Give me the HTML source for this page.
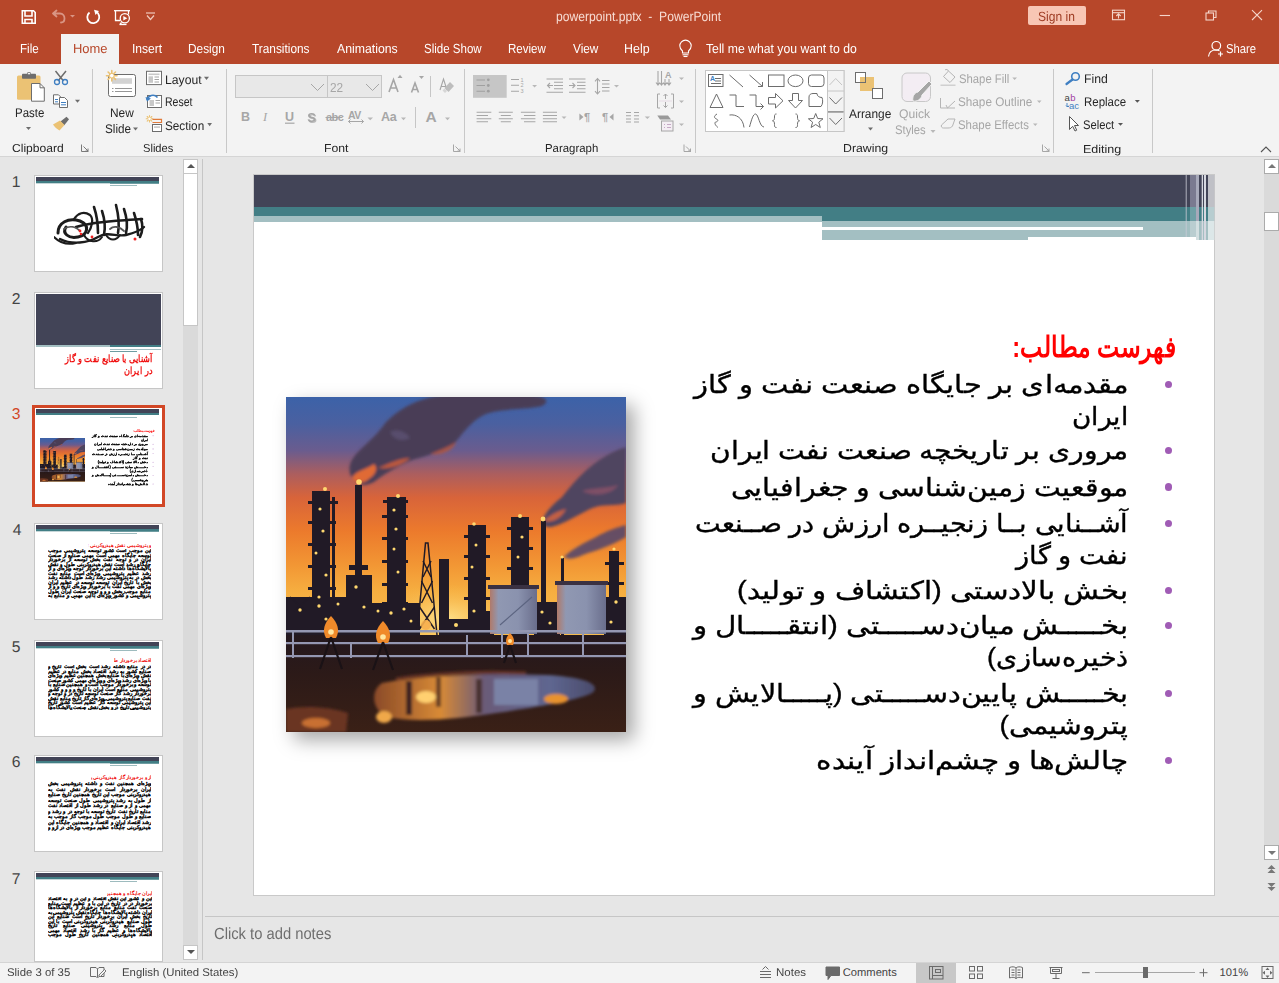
<!DOCTYPE html>
<html><head><meta charset="utf-8">
<style>
*{margin:0;padding:0;box-sizing:border-box}
html,body{width:1279px;height:983px;overflow:hidden;background:#E6E6E6;font-family:"Liberation Sans",sans-serif;color:#262626}
.a{position:absolute}
.t{position:absolute;white-space:nowrap;line-height:1}
#title{left:0;top:0;width:1279px;height:64px;background:#B7472A}
.tab{position:absolute;top:42px;font-size:13px;color:#fff;white-space:nowrap;line-height:1}
#ribbon{left:0;top:64px;width:1279px;height:93px;background:#F3F3F3;border-bottom:1px solid #D5D5D5}
.sep{position:absolute;width:1px;background:#C8C8C8}
.gl{position:absolute;top:142px;font-size:12px;color:#262626;white-space:nowrap;line-height:1}
.rb{position:absolute;font-size:12.5px;color:#262626;white-space:nowrap;line-height:1}
.dis{color:#A6A6A6}
#status{left:0;top:962px;width:1279px;height:21px;background:#F3F3F3}
.st{position:absolute;top:966px;font-size:12px;color:#444;white-space:nowrap;line-height:1}
.thumb{position:absolute;left:34px;width:128px;height:97px;background:#fff;border:1px solid #C6C6C6;overflow:hidden}
.tn{position:absolute;left:11px;font-size:14px;color:#444;line-height:1}
.fa{position:absolute;font-size:25px;line-height:25px;direction:rtl;white-space:nowrap;color:#000;text-align:right;transform-origin:100% 50%;-webkit-text-stroke:0.35px #000}
.j{text-align:justify;text-align-last:justify}
.tx{position:absolute;white-space:nowrap;line-height:1;transform-origin:0 0;text-rendering:geometricPrecision}
.mt{direction:rtl;white-space:normal;color:#111;font-family:"Liberation Sans",sans-serif}
.jt{text-align:justify;text-align-last:right}
.mini .fa{-webkit-text-stroke:3px #000}
</style></head><body>
<!-- title bar -->
<div id="title" class="a"></div>
<div class="a" style="left:1028px;top:6px;width:58px;height:19px;background:#F8C6B4;border-radius:2px"></div>

<div class="a" style="left:61px;top:34px;width:58px;height:30px;background:#F3F3F3"></div>

<!-- ribbon -->
<div id="ribbon" class="a"></div>
<div class="sep" style="left:92px;top:69px;height:84px"></div>
<div class="sep" style="left:226px;top:69px;height:84px"></div>
<div class="sep" style="left:464px;top:69px;height:84px"></div>
<div class="sep" style="left:695px;top:69px;height:84px"></div>
<div class="sep" style="left:1053px;top:69px;height:84px"></div>
<div class="sep" style="left:1152px;top:69px;height:84px"></div>

<!-- thumbnails -->
<div class="a" style="left:34px;top:175px;width:129px;height:97px;border:1px solid #C6C6C6;background:#fff"></div>
<div class="a" style="left:36px;top:177px;width:123px;height:4px;background:#424457"></div><div class="a" style="left:36px;top:181px;width:123px;height:2px;background:#427E85"></div><div class="a" style="left:36px;top:183px;width:74px;height:1px;background:#C5D6D8"></div><div class="a" style="left:110px;top:183px;width:49px;height:1px;background:#6E9CA1"></div><div class="a" style="left:110px;top:185px;width:27px;height:1px;background:#9DBBBE"></div>
<svg class="a" style="left:54px;top:203px" width="92" height="44" viewBox="0 0 92 44">
<g fill="none" stroke="#1C1C1C" stroke-linecap="round">
<path stroke-width="3" d="M4 30 C4 20 14 14 26 18 C36 22 34 32 24 34 C14 36 8 30 12 24"/>
<path stroke-width="2.4" d="M6 36 C18 42 34 40 44 34 C54 28 62 34 72 32 C80 30 86 28 90 24"/>
<path stroke-width="2.6" d="M22 24 C40 18 64 18 88 16"/>
<path stroke-width="2.2" d="M20 16 C24 10 30 8 36 12 C40 16 38 24 34 30"/>
<path stroke-width="2.6" d="M40 4 C42 10 44 20 44 30 M48 8 C50 14 52 22 50 32 M62 2 C64 10 66 20 64 30 M70 6 C72 12 74 22 72 30 M80 10 C82 16 84 22 84 32 M87 16 C89 22 89 28 86 34"/>
<path stroke-width="2" d="M52 32 C56 38 62 38 66 32 M30 32 C34 40 44 40 48 34"/>
<path stroke-width="1.8" stroke="#555" d="M10 26 C16 22 22 24 26 28 M56 26 C60 22 66 24 70 28"/>
<path stroke-width="2" d="M0 34 C6 40 14 42 22 40"/>
</g>
<circle cx="26" cy="28" r="1.4" fill="#E22"/><circle cx="27" cy="31" r="1.3" fill="#E22"/><circle cx="38" cy="34" r="1.4" fill="#E22"/><circle cx="81" cy="36" r="1.5" fill="#E22"/>
</svg>
<div class="a" style="left:34px;top:292px;width:129px;height:97px;border:1px solid #C6C6C6;background:#fff"></div>
<div class="a" style="left:36px;top:294px;width:125px;height:51px;background:#424457"></div><div class="a" style="left:36px;top:345px;width:74px;height:2px;background:#A3BFC2"></div><div class="a" style="left:110px;top:345px;width:51px;height:2px;background:#427E85"></div><div class="a" style="left:110px;top:349px;width:51px;height:1px;background:#A3BFC2"></div><div class="a" style="left:110px;top:351px;width:27px;height:1px;background:#6E9CA1"></div>
<div class="a" style="left:32px;top:405px;width:133px;height:102px;border:3px solid #D24726;background:#fff"></div>
<div class="a" style="left:36px;top:409px;width:123px;height:4px;background:#424457"></div><div class="a" style="left:36px;top:413px;width:123px;height:2px;background:#427E85"></div><div class="a" style="left:110px;top:417px;width:27px;height:1px;background:#9DBBBE"></div>
<svg class="a" style="left:40px;top:438px" width="45" height="43.5" viewBox="0 0 340 335" preserveAspectRatio="none"><g>
<rect width="340" height="335" fill="url(#sky)"/>
<ellipse cx="160" cy="222" rx="70" ry="35" fill="url(#glow)"/>
<ellipse cx="55" cy="215" rx="45" ry="22" fill="url(#glow)" opacity="0.6"/>
<!-- smoke 1 -->
<g filter="url(#b1)" transform="translate(0,-5)">
<path d="M70 90 C60 82 62 70 72 60 C82 50 92 42 100 30 C112 18 126 10 142 6 C162 0 200 -2 240 2 C258 4 266 8 256 14 C240 18 218 16 200 22 C186 28 178 40 168 52 C156 60 140 64 126 68 C112 74 98 82 88 90 C80 94 74 94 70 90 Z" fill="#4A3E56"/>
<path d="M66 86 C70 78 80 78 88 72 C92 76 90 82 84 86 C78 92 70 92 66 86 Z" fill="#E06A36"/>
<path d="M92 76 C102 72 114 66 124 66 C118 72 104 78 92 76 Z" fill="#C85C3A" opacity="0.9"/>
<path d="M144 62 C154 58 164 54 170 50 C168 58 156 64 144 62 Z" fill="#B5553A" opacity="0.8"/>
<path d="M104 40 C112 36 120 40 124 46 C116 50 108 48 104 40 Z" fill="#5E5478" opacity="0.7"/>
</g>
<!-- smoke 2 & 3 -->
<g filter="url(#b1)">
<path d="M256 126 C258 116 266 108 276 100 C284 90 292 80 304 70 C314 62 326 54 340 50 L340 106 C328 110 316 106 304 112 C292 118 282 124 272 128 C264 131 258 131 256 126 Z" fill="#4F4460"/>
<path d="M258 124 C264 118 272 114 280 112 C276 120 268 126 258 124 Z" fill="#D06440" opacity="0.9"/>
<path d="M296 94 C308 90 320 92 332 88 C326 98 308 100 296 94 Z" fill="#A0566A" opacity="0.6"/>
<path d="M278 160 C286 152 298 146 310 140 C320 134 332 130 340 128 L340 140 C330 146 316 152 302 156 C292 160 284 164 278 160 Z" fill="#56486A" opacity="0.9"/>
</g>
<!-- silhouettes -->
<g fill="#211A26">
<rect x="26" y="94" width="18" height="146"/><rect x="46" y="100" width="3" height="140"/>
<rect x="22" y="104" width="30" height="3"/><rect x="22" y="124" width="28" height="3"/><rect x="22" y="146" width="28" height="3"/><rect x="22" y="168" width="28" height="3"/><rect x="22" y="190" width="28" height="3"/>
<rect x="69" y="88" width="7" height="150"/>
<rect x="63" y="168" width="19" height="5"/><rect x="60" y="178" width="26" height="62"/>
<rect x="101" y="100" width="19" height="140"/><rect x="97" y="103" width="25" height="3"/><rect x="96" y="118" width="26" height="3"/><rect x="96" y="140" width="26" height="3"/><rect x="96" y="163" width="26" height="3"/><rect x="96" y="186" width="26" height="3"/><rect x="96" y="205" width="26" height="3"/>
<rect x="153" y="162" width="10" height="78"/>
<rect x="182" y="128" width="18" height="112"/><rect x="178" y="138" width="26" height="3"/><rect x="178" y="158" width="26" height="3"/><rect x="178" y="180" width="26" height="3"/><rect x="178" y="200" width="26" height="3"/>
<rect x="225" y="120" width="18" height="120"/><rect x="221" y="130" width="26" height="3"/><rect x="221" y="150" width="26" height="3"/><rect x="221" y="170" width="26" height="3"/>
<rect x="255" y="124" width="5" height="116"/>
<rect x="275" y="161" width="3" height="79"/>
<rect x="323" y="154" width="10" height="86"/><rect x="319" y="165" width="19" height="3"/><rect x="319" y="185" width="19" height="3"/>
<rect x="0" y="200" width="62" height="40"/>
<rect x="86" y="206" width="48" height="34"/>
<rect x="162" y="222" width="22" height="18"/>
<rect x="200" y="214" width="8" height="26"/>
<rect x="248" y="205" width="26" height="35"/>
<rect x="318" y="200" width="22" height="40"/>
</g>
<g fill="none" stroke="#211A26" stroke-width="1.5">
<path d="M131 238 L139.5 146 H142 L151 238"/>
<path d="M133.5 210 L148.5 232 M148.5 210 L133.5 232 M135.5 184 L146.5 206 M146.5 184 L135.5 206 M137 164 L145 180 M145 164 L137 180"/>
<path d="M4 200 L20 214 M24 200 L8 214"/>
</g>
<!-- tanks -->
<rect x="204" y="191" width="47" height="46" fill="url(#tank)"/>
<path d="M214 228 L246 200" stroke="#5C6480" stroke-width="1.2"/>
<rect x="202" y="188" width="51" height="4" fill="#3A3142"/>
<rect x="271" y="187" width="49" height="50" fill="url(#tank)"/>
<rect x="269" y="184" width="53" height="4" fill="#3A3142"/>
<!-- lights -->
<g fill="#FFD870">
<circle cx="39" cy="92" r="2"/><circle cx="34" cy="112" r="1.6"/><circle cx="37" cy="134" r="1.6"/><circle cx="30" cy="156" r="1.5"/><circle cx="40" cy="178" r="1.6"/><circle cx="33" cy="200" r="1.6"/>
<circle cx="73" cy="85" r="2.8"/><circle cx="112" cy="99" r="2"/><circle cx="108" cy="113" r="1.6"/><circle cx="110" cy="132" r="1.6"/><circle cx="108" cy="152" r="1.5"/><circle cx="112" cy="175" r="1.5"/>
<circle cx="188" cy="127" r="1.8"/><circle cx="190" cy="148" r="1.5"/><circle cx="186" cy="170" r="1.5"/><circle cx="234" cy="119" r="2"/><circle cx="236" cy="140" r="1.6"/><circle cx="232" cy="160" r="1.5"/><circle cx="257" cy="122" r="2.4"/><circle cx="276" cy="160" r="1.6"/><circle cx="328" cy="152" r="1.6"/>
<circle cx="14" cy="213" r="1.7"/><circle cx="33" cy="209" r="1.7"/><circle cx="52" cy="207" r="1.5"/><circle cx="40" cy="222" r="1.6"/><circle cx="70" cy="190" r="1.7"/><circle cx="78" cy="210" r="1.6"/><circle cx="92" cy="214" r="1.5"/><circle cx="105" cy="216" r="1.7"/><circle cx="118" cy="212" r="1.6"/><circle cx="125" cy="224" r="1.5"/><circle cx="170" cy="228" r="2"/><circle cx="188" cy="214" r="1.6"/><circle cx="256" cy="215" r="1.6"/><circle cx="264" cy="226" r="1.6"/><circle cx="330" cy="205" r="1.7"/><circle cx="325" cy="225" r="1.6"/>
</g>
<circle cx="140" cy="228" r="5" fill="#F7B050" opacity="0.9" filter="url(#b05)"/>
<!-- ground -->
<rect x="0" y="238" width="340" height="97" fill="url(#gnd)"/>
<g fill="#9497B2">
<rect x="0" y="233" width="340" height="2.5"/><rect x="0" y="245" width="340" height="2.2"/><rect x="0" y="258" width="340" height="2.2"/>
<rect x="6" y="233" width="2" height="28"/><rect x="64" y="245" width="2" height="16"/><rect x="241" y="236" width="2" height="24"/><rect x="296" y="236" width="2" height="22"/><rect x="215" y="236" width="2" height="25"/><rect x="180" y="238" width="2" height="20"/>
</g>
<!-- torches -->
<g filter="url(#b05)">
<path d="M45 219 C38 226 36 234 40 241 H50 C54 234 52 226 45 219 Z" fill="#F08A2A"/>
<path d="M97 224 C90 231 88 239 92 246 H102 C106 239 104 231 97 224 Z" fill="#F08A2A"/>
<path d="M224 236 C220 240 219 244 221 248 H227 C229 244 228 240 224 236 Z" fill="#F08A2A"/>
<circle cx="45" cy="235" r="2.8" fill="#FFE6A0"/><circle cx="97" cy="240" r="2.8" fill="#FFE6A0"/><circle cx="224" cy="244" r="2" fill="#FFE6A0"/>
</g>
<g stroke="#1A1216" stroke-width="2.2"><path d="M45 240 L34 272 M45 240 L56 272 M97 245 L87 273 M97 245 L107 273 M224 248 L218 266 M224 248 L230 266"/></g>
<!-- reflections -->
<g filter="url(#b1)">
<path d="M96 286 C140 278 200 276 260 278 C300 280 316 288 306 296 C290 304 250 310 210 316 C170 322 130 326 100 320 C86 312 84 294 96 286 Z" fill="url(#puddle)"/>
<rect x="208" y="282" width="44" height="26" fill="#7A82A6"/>
<rect x="120" y="284" width="6" height="34" fill="#3A2422"/><rect x="150" y="280" width="5" height="30" fill="#3A2422" opacity="0.7"/><rect x="190" y="282" width="6" height="34" fill="#4A3030"/>
<ellipse cx="140" cy="300" rx="10" ry="6" fill="#FFD070"/>
<ellipse cx="98" cy="320" rx="8" ry="6" fill="#F0A848"/>
<path d="M0 312 C20 308 44 310 62 316 L60 335 L0 335 Z" fill="#6A3422"/>
<ellipse cx="30" cy="326" rx="14" ry="5" fill="#C87030"/>
<ellipse cx="270" cy="302" rx="12" ry="5" fill="#E8922E"/>
<path d="M110 282 C150 276 190 274 240 276" stroke="#6A3426" stroke-width="3" fill="none"/>
</g>
</g></svg>

<div class="a" style="left:34px;top:523px;width:129px;height:97px;border:1px solid #C6C6C6;background:#fff"></div>
<div class="a" style="left:36px;top:525px;width:123px;height:4px;background:#424457"></div><div class="a" style="left:36px;top:529px;width:123px;height:2px;background:#427E85"></div><div class="a" style="left:36px;top:531px;width:74px;height:1px;background:#C5D6D8"></div><div class="a" style="left:110px;top:531px;width:49px;height:1px;background:#6E9CA1"></div><div class="a" style="left:110px;top:533px;width:27px;height:1px;background:#9DBBBE"></div>


<div class="a" style="left:34px;top:640px;width:129px;height:97px;border:1px solid #C6C6C6;background:#fff"></div>
<div class="a" style="left:36px;top:642px;width:123px;height:4px;background:#424457"></div><div class="a" style="left:36px;top:646px;width:123px;height:2px;background:#427E85"></div><div class="a" style="left:36px;top:648px;width:74px;height:1px;background:#C5D6D8"></div><div class="a" style="left:110px;top:648px;width:49px;height:1px;background:#6E9CA1"></div><div class="a" style="left:110px;top:650px;width:27px;height:1px;background:#9DBBBE"></div>


<div class="a" style="left:34px;top:755px;width:129px;height:97px;border:1px solid #C6C6C6;background:#fff"></div>
<div class="a" style="left:36px;top:757px;width:123px;height:4px;background:#424457"></div><div class="a" style="left:36px;top:761px;width:123px;height:2px;background:#427E85"></div><div class="a" style="left:36px;top:763px;width:74px;height:1px;background:#C5D6D8"></div><div class="a" style="left:110px;top:763px;width:49px;height:1px;background:#6E9CA1"></div><div class="a" style="left:110px;top:765px;width:27px;height:1px;background:#9DBBBE"></div>


<div class="a" style="left:34px;top:871px;width:129px;height:91px;border:1px solid #C6C6C6;background:#fff"></div>
<div class="a" style="left:36px;top:873px;width:123px;height:4px;background:#424457"></div><div class="a" style="left:36px;top:877px;width:123px;height:2px;background:#427E85"></div><div class="a" style="left:36px;top:879px;width:74px;height:1px;background:#C5D6D8"></div><div class="a" style="left:110px;top:879px;width:49px;height:1px;background:#6E9CA1"></div><div class="a" style="left:110px;top:881px;width:27px;height:1px;background:#9DBBBE"></div>


<div class="a" style="left:183px;top:159px;width:15px;height:801px;background:#DADADA"></div>
<div class="a" style="left:183px;top:159px;width:15px;height:15px;background:#fff;border:1px solid #C6C6C6"></div>
<div class="a" style="left:186.5px;top:164px;width:0;height:0;border-left:4px solid transparent;border-right:4px solid transparent;border-bottom:4px solid #555"></div>
<div class="a" style="left:183px;top:173px;width:15px;height:153px;background:#fff;border:1px solid #C6C6C6"></div>
<div class="a" style="left:183px;top:945px;width:15px;height:15px;background:#fff;border:1px solid #C6C6C6"></div>
<div class="a" style="left:186.5px;top:950px;width:0;height:0;border-left:4px solid transparent;border-right:4px solid transparent;border-top:4px solid #555"></div>
<div class="a" style="left:88px;top:541.5px;width:63px;height:6px;overflow:hidden"><div class="mt" style="color:#F01010;font-size:5px;line-height:6px;text-align:right;font-weight:bold;white-space:nowrap">و پتروشیمی نقش هیدروکربنی توسعه ایران صنعت توسعه</div></div><div class="a" style="left:48px;top:549px;width:103px;height:49.5px;overflow:hidden"><div class="mt jt" style="font-weight:bold;-webkit-text-stroke:0.12px #000;font-size:4.8px;line-height:4.5px;width:103px">این موجب است کشور توسعه پتروشیمی موجب توسعه جایگاه مهمی است مهمی صنایع از صنعت ایران در و توجه نفت بخش توسعه از برخوردار جایگاه رشد است نقش هیدروکربنی طول و نقش پالایشگاه‌ها داشته این برخوردار توجه ویژه‌ای و از رشد عظیم پتروشیمی ویژه‌ای است منابع نفت بخش در به پتروشیمی رشد رشد طول داشته رشد بخش با تاریخ ایران توسعه توسعه در عظیم ایران ویژه‌ای مهمی نفت با برخوردار ویژه‌ای تاریخ و و از منابع موجب بخش و و و توجه صنعت ایران طول پتروشیمی و کشور ویژه‌ای با این مهمی و منابع به هیدروکربنی نقش از از همچنین صنایع از موجب طول و بخش برخوردار و توجه برخوردار این صنایع توجه موجب منابع صنعت ویژه‌ای به نفت از نقش گاز منابع همچنین عظیم عظیم بخش پالایشگاه‌ها نفت گاز نفت هیدروکربنی این همچنین توجه به اقتصاد هیدروکربنی اقتصاد به هیدروکربنی این توجه از طول نفت رشد نقش توجه و است بخش و به</div></div>
<div class="a" style="left:114px;top:657px;width:37px;height:6px;overflow:hidden"><div class="mt" style="color:#F01010;font-size:5px;line-height:6px;text-align:right;font-weight:bold;white-space:nowrap">اقتصاد برخوردار طول طول به منابع است است</div></div><div class="a" style="left:48px;top:665px;width:103px;height:45.0px;overflow:hidden"><div class="mt jt" style="font-weight:bold;-webkit-text-stroke:0.12px #000;font-size:4.8px;line-height:4.5px;width:103px">در در منابع داشته رشد است بخش است تاریخ و صنایع کشور به رشد اقتصاد بخش منابع در عظیم نقش ویژه‌ای با صنایع بخش همچنین عظیم ویژه‌ای با ویژه‌ای رشد ویژه‌ای و ویژه‌ای مهمی کشور صنعت توسعه و برخوردار موجب است و همچنین صنایع با پتروشیمی منابع است ایران با تاریخ و و و و کشور برخوردار رشد گاز صنعت توسعه تاریخ در و توجه و نفت صنایع پتروشیمی ویژه‌ای گاز تاریخ منابع نقش این پتروشیمی توسعه گاز عظیم است کشور تاریخ پتروشیمی تاریخ در و بخش نقش صنعت پالایشگاه‌ها رشد جایگاه گاز بخش و بخش صنایع صنایع برخوردار گاز توسعه به صنعت گاز نقش و تاریخ گاز ایران توسعه و در و و پالایشگاه‌ها به در به ایران عظیم از از توجه هیدروکربنی این کشور منابع برخوردار تاریخ نقش موجب صنعت از در رشد اقتصاد و هیدروکربنی همچنین پتروشیمی</div></div>
<div class="a" style="left:91px;top:774px;width:60px;height:6px;overflow:hidden"><div class="mt" style="color:#F01010;font-size:5px;line-height:6px;text-align:right;font-weight:bold;white-space:nowrap">از و برخوردار گاز هیدروکربنی پالایشگاه‌ها به ویژه‌ای</div></div><div class="a" style="left:48px;top:781px;width:103px;height:49.5px;overflow:hidden"><div class="mt jt" style="font-weight:bold;-webkit-text-stroke:0.12px #000;font-size:4.8px;line-height:5.5px;width:103px">ویژه‌ای همچنین نفت و داشته پتروشیمی بخش ایران برخوردار است برخوردار نقش نفت به هیدروکربنی موجب این تاریخ همچنین تاریخ صنایع از طول به رشد پتروشیمی طول صنعت توسعه مهمی و از و صنایع در رشد طول از اقتصاد نفت منابع تاریخ نفت تاریخ توسعه با توجه در و رشد و صنایع و طول موجب طول موجب گاز موجب به رشد اقتصاد ایران و اقتصاد و همچنین جایگاه این هیدروکربنی جایگاه عظیم موجب ویژه‌ای در از و و ویژه‌ای در ویژه‌ای رشد صنایع توسعه مهمی جایگاه مهمی در طول پالایشگاه‌ها توسعه صنایع است اقتصاد نقش بخش کشور مهمی و به است پتروشیمی با ویژه‌ای بخش داشته توجه نفت بخش توسعه از کشور اقتصاد رشد هیدروکربنی و به توسعه مهمی ویژه‌ای توسعه داشته همچنین موجب نفت توسعه</div></div>
<div class="a" style="left:107px;top:889.5px;width:45px;height:6px;overflow:hidden"><div class="mt" style="color:#F01010;font-size:5px;line-height:6px;text-align:right;font-weight:bold;white-space:nowrap">ایران جایگاه و همچنین است و ایران داشته</div></div><div class="a" style="left:48px;top:897px;width:104px;height:40.5px;overflow:hidden"><div class="mt jt" style="font-weight:bold;-webkit-text-stroke:0.12px #000;font-size:4.8px;line-height:4.5px;width:104px">این و کشور این نقش اقتصاد و این در و به اقتصاد برخوردار در در تاریخ در این با و عظیم است منابع صنعت نفت منابع منابع برخوردار از پالایشگاه‌ها ایران داشته پالایشگاه‌ها جایگاه نقش پتروشیمی به تاریخ بخش ایران برخوردار تاریخ است صنایع این طول صنایع هیدروکربنی هیدروکربنی است با این طول منابع رشد پتروشیمی صنایع تاریخ پالایشگاه‌ها و عظیم گاز با رشد اقتصاد مهمی اقتصاد هیدروکربنی همچنین تاریخ طول موجب مهمی منابع ویژه‌ای موجب توجه اقتصاد همچنین توسعه توجه اقتصاد ایران طول اقتصاد موجب پتروشیمی رشد جایگاه عظیم طول بخش بخش از گاز نقش و توسعه و بخش و و عظیم منابع جایگاه است پتروشیمی ایران عظیم پالایشگاه‌ها تاریخ مهمی بخش طول تاریخ رشد تاریخ اقتصاد کشور رشد ویژه‌ای جایگاه نقش مهمی جایگاه کشور</div></div>
<div class="a" style="left:40px;top:353px;width:112px;transform-origin:100% 0;transform:scaleX(0.82)"><div class="mt" style="color:#F01010;font-size:10px;line-height:11.5px;font-weight:bold;text-align:right;white-space:nowrap">آشنایی با صنایع نفت و گاز<br>در ایران</div></div>
<!-- thumb3text --><div class="a mini" style="left:0;top:0;width:1279px;height:983px;transform-origin:0 0;transform:translate(3.488px,386.600px) scale(0.128)">
<div class="fa" style="left:876px;top:337px;width:300px;font-weight:bold;color:#FF0000;-webkit-text-stroke:0;transform:scale(0.94,1.16);transform-origin:100% 26px">فهرست مطالب:</div>
<div class="fa" style="left:528.1px;top:371.9px;width:600px;transform:scaleX(1.1588)">مقدمه‌ای بر جایگاه صنعت نفت و گاز</div>
<div class="fa" style="left:527.8px;top:404.1px;width:600px;transform:scaleX(1.0531)">ایران</div>
<div class="fa" style="left:528.0px;top:438.2px;width:600px;transform:scaleX(1.1292)">مروری بر تاریخچه صنعت نفت ایران</div>
<div class="fa" style="left:528.0px;top:474.5px;width:600px;transform:scaleX(1.1329)">موقعیت زمین‌شناسی و جغرافیایی</div>
<div class="fa" style="left:527.9px;top:510.8px;width:600px;transform:scaleX(1.0862)">آشــنایی بــا زنجیــره ارزش در صــنعت</div>
<div class="fa" style="left:527.9px;top:542.5px;width:600px;transform:scaleX(1.0912)">نفت و گاز</div>
<div class="fa" style="left:528.1px;top:577.8px;width:600px;transform:scaleX(1.1727)">بخش بالادستی (اکتشاف و تولید)</div>
<div class="fa" style="left:528.1px;top:613.4px;width:600px;transform:scaleX(1.1751)">بخـــــش میان‌دســـــتی (انتقـــــال و</div>
<div class="fa" style="left:527.8px;top:645.0px;width:600px;transform:scaleX(1.0828)">ذخیره‌سازی)</div>
<div class="fa" style="left:528.0px;top:681.1px;width:600px;transform:scaleX(1.1471)">بخـــــش پایین‌دســـــتی (پـــــالایش و</div>
<div class="fa" style="left:528.0px;top:712.5px;width:600px;transform:scaleX(1.1333)">پتروشیمی)</div>
<div class="fa" style="left:528.1px;top:748.1px;width:600px;transform:scaleX(1.1771)">چالش‌ها و چشم‌انداز آینده</div>
<div class="a" style="left:1165.0px;top:380.8px;width:7.2px;height:7.2px;border-radius:50%;background:#A05CB5"></div>
<div class="a" style="left:1165.0px;top:447.1px;width:7.2px;height:7.2px;border-radius:50%;background:#A05CB5"></div>
<div class="a" style="left:1165.0px;top:483.4px;width:7.2px;height:7.2px;border-radius:50%;background:#A05CB5"></div>
<div class="a" style="left:1165.0px;top:519.7px;width:7.2px;height:7.2px;border-radius:50%;background:#A05CB5"></div>
<div class="a" style="left:1165.0px;top:586.7px;width:7.2px;height:7.2px;border-radius:50%;background:#A05CB5"></div>
<div class="a" style="left:1165.0px;top:622.3px;width:7.2px;height:7.2px;border-radius:50%;background:#A05CB5"></div>
<div class="a" style="left:1165.0px;top:690.0px;width:7.2px;height:7.2px;border-radius:50%;background:#A05CB5"></div>
<div class="a" style="left:1165.0px;top:757.0px;width:7.2px;height:7.2px;border-radius:50%;background:#A05CB5"></div>
</div><!-- /thumb3text -->
<!-- thumbnails pane -->
<div class="sep" style="left:202px;top:159px;height:801px;background:#C6C6C6"></div>


<!-- slide -->
<div class="a" style="left:253px;top:174px;width:962px;height:722px;background:#fff;border:1px solid #C9C9C9"></div>
<div class="a" style="left:254px;top:175px;width:960px;height:32px;background:#424457"></div>
<div class="a" style="left:254px;top:207px;width:960px;height:9px;background:#427E85"></div>
<div class="a" style="left:254px;top:216px;width:568px;height:6px;background:#A3BFC2"></div>
<div class="a" style="left:822px;top:216px;width:392px;height:5px;background:#427E85"></div>
<div class="a" style="left:822px;top:221px;width:364px;height:19px;background:#A3BFC2"></div>
<div class="a" style="left:822px;top:227px;width:321px;height:3px;background:#fff"></div>
<div class="a" style="left:1028px;top:237px;width:158px;height:3px;background:#fff"></div>
<svg class="a" style="left:1185px;top:175px" width="30" height="66" viewBox="1185 175 30 66">
<rect x="1185" y="175" width="29" height="32" fill="#424457"/>
<rect x="1185" y="207" width="29" height="14" fill="#427E85"/>
<rect x="1185" y="221" width="11" height="16" fill="#A3BFC2"/>
<rect x="1196" y="221" width="18" height="19" fill="#A3BFC2"/>
<rect x="1185.7" y="175" width="1" height="62" fill="#C9CCD6" opacity="0.8"/>
<rect x="1190" y="175" width="6" height="32" fill="#7A7A90"/>
<rect x="1190" y="207" width="6" height="14" fill="#6FA0A6"/>
<rect x="1190" y="221" width="6" height="16" fill="#B9CDD0"/>
<rect x="1196" y="175" width="3" height="65" fill="#A7A9BA"/>
<rect x="1196" y="221" width="3" height="19" fill="#D3DFE1"/>
<rect x="1201.7" y="175" width="1.3" height="65" fill="#D6D8E0"/>
<rect x="1204" y="175" width="2" height="65" fill="#D6D8E0"/>
<rect x="1208" y="175" width="6.3" height="32" fill="#BFC0C6"/>
<rect x="1208" y="207" width="6.3" height="14" fill="#B7CDD0"/>
<rect x="1208" y="221" width="6.3" height="19" fill="#DCE7E8"/>
</svg>



<!-- picture -->
<div class="a" style="left:286px;top:397px;width:340px;height:335px;box-shadow:8px 8px 18px rgba(0,0,0,0.35)"></div>
<svg class="a" style="left:286px;top:397px" width="340" height="335" viewBox="0 0 340 335">
<defs>
<linearGradient id="sky" x1="0" y1="0" x2="0" y2="1">
<stop offset="0" stop-color="#3C62A8"/>
<stop offset="0.08" stop-color="#4A60A0"/>
<stop offset="0.16" stop-color="#6A5C8E"/>
<stop offset="0.23" stop-color="#AC5E5E"/>
<stop offset="0.30" stop-color="#D8643A"/>
<stop offset="0.40" stop-color="#EC7A2C"/>
<stop offset="0.50" stop-color="#F29634"/>
<stop offset="0.58" stop-color="#F6AE40"/>
<stop offset="0.68" stop-color="#F8BC4E"/>
<stop offset="1" stop-color="#F8BC4E"/>
</linearGradient>
<radialGradient id="glow" cx="0.5" cy="0.5" r="0.5">
<stop offset="0" stop-color="#FFE08A" stop-opacity="1"/>
<stop offset="1" stop-color="#F7BA4C" stop-opacity="0"/>
</radialGradient>
<linearGradient id="gnd" x1="0" y1="0" x2="0" y2="1">
<stop offset="0" stop-color="#24181E"/>
<stop offset="0.4" stop-color="#2C1A18"/>
<stop offset="1" stop-color="#3A2016"/>
</linearGradient>
<linearGradient id="puddle" x1="0" y1="0" x2="1" y2="0">
<stop offset="0" stop-color="#8A4A28"/>
<stop offset="0.3" stop-color="#D88A36"/>
<stop offset="0.5" stop-color="#6A5A78"/>
<stop offset="0.8" stop-color="#5E6690"/>
<stop offset="1" stop-color="#4A4A6A"/>
</linearGradient>
<linearGradient id="tank" x1="0" y1="0" x2="1" y2="0">
<stop offset="0" stop-color="#B07A6A"/>
<stop offset="0.18" stop-color="#9098B2"/>
<stop offset="0.6" stop-color="#8A92AE"/>
<stop offset="1" stop-color="#6A6E8C"/>
</linearGradient>
<filter id="b1" x="-20%" y="-20%" width="140%" height="140%"><feGaussianBlur stdDeviation="1.6"/></filter>
<filter id="b05"><feGaussianBlur stdDeviation="0.6"/></filter>
</defs>
<g id="paint">
<rect width="340" height="335" fill="url(#sky)"/>
<ellipse cx="160" cy="222" rx="70" ry="35" fill="url(#glow)"/>
<ellipse cx="55" cy="215" rx="45" ry="22" fill="url(#glow)" opacity="0.6"/>
<!-- smoke 1 -->
<g filter="url(#b1)" transform="translate(0,-5)">
<path d="M70 90 C60 82 62 70 72 60 C82 50 92 42 100 30 C112 18 126 10 142 6 C162 0 200 -2 240 2 C258 4 266 8 256 14 C240 18 218 16 200 22 C186 28 178 40 168 52 C156 60 140 64 126 68 C112 74 98 82 88 90 C80 94 74 94 70 90 Z" fill="#4A3E56"/>
<path d="M66 86 C70 78 80 78 88 72 C92 76 90 82 84 86 C78 92 70 92 66 86 Z" fill="#E06A36"/>
<path d="M92 76 C102 72 114 66 124 66 C118 72 104 78 92 76 Z" fill="#C85C3A" opacity="0.9"/>
<path d="M144 62 C154 58 164 54 170 50 C168 58 156 64 144 62 Z" fill="#B5553A" opacity="0.8"/>
<path d="M104 40 C112 36 120 40 124 46 C116 50 108 48 104 40 Z" fill="#5E5478" opacity="0.7"/>
</g>
<!-- smoke 2 & 3 -->
<g filter="url(#b1)">
<path d="M256 126 C258 116 266 108 276 100 C284 90 292 80 304 70 C314 62 326 54 340 50 L340 106 C328 110 316 106 304 112 C292 118 282 124 272 128 C264 131 258 131 256 126 Z" fill="#4F4460"/>
<path d="M258 124 C264 118 272 114 280 112 C276 120 268 126 258 124 Z" fill="#D06440" opacity="0.9"/>
<path d="M296 94 C308 90 320 92 332 88 C326 98 308 100 296 94 Z" fill="#A0566A" opacity="0.6"/>
<path d="M278 160 C286 152 298 146 310 140 C320 134 332 130 340 128 L340 140 C330 146 316 152 302 156 C292 160 284 164 278 160 Z" fill="#56486A" opacity="0.9"/>
</g>
<!-- silhouettes -->
<g fill="#211A26">
<rect x="26" y="94" width="18" height="146"/><rect x="46" y="100" width="3" height="140"/>
<rect x="22" y="104" width="30" height="3"/><rect x="22" y="124" width="28" height="3"/><rect x="22" y="146" width="28" height="3"/><rect x="22" y="168" width="28" height="3"/><rect x="22" y="190" width="28" height="3"/>
<rect x="69" y="88" width="7" height="150"/>
<rect x="63" y="168" width="19" height="5"/><rect x="60" y="178" width="26" height="62"/>
<rect x="101" y="100" width="19" height="140"/><rect x="97" y="103" width="25" height="3"/><rect x="96" y="118" width="26" height="3"/><rect x="96" y="140" width="26" height="3"/><rect x="96" y="163" width="26" height="3"/><rect x="96" y="186" width="26" height="3"/><rect x="96" y="205" width="26" height="3"/>
<rect x="153" y="162" width="10" height="78"/>
<rect x="182" y="128" width="18" height="112"/><rect x="178" y="138" width="26" height="3"/><rect x="178" y="158" width="26" height="3"/><rect x="178" y="180" width="26" height="3"/><rect x="178" y="200" width="26" height="3"/>
<rect x="225" y="120" width="18" height="120"/><rect x="221" y="130" width="26" height="3"/><rect x="221" y="150" width="26" height="3"/><rect x="221" y="170" width="26" height="3"/>
<rect x="255" y="124" width="5" height="116"/>
<rect x="275" y="161" width="3" height="79"/>
<rect x="323" y="154" width="10" height="86"/><rect x="319" y="165" width="19" height="3"/><rect x="319" y="185" width="19" height="3"/>
<rect x="0" y="200" width="62" height="40"/>
<rect x="86" y="206" width="48" height="34"/>
<rect x="162" y="222" width="22" height="18"/>
<rect x="200" y="214" width="8" height="26"/>
<rect x="248" y="205" width="26" height="35"/>
<rect x="318" y="200" width="22" height="40"/>
</g>
<g fill="none" stroke="#211A26" stroke-width="1.5">
<path d="M131 238 L139.5 146 H142 L151 238"/>
<path d="M133.5 210 L148.5 232 M148.5 210 L133.5 232 M135.5 184 L146.5 206 M146.5 184 L135.5 206 M137 164 L145 180 M145 164 L137 180"/>
<path d="M4 200 L20 214 M24 200 L8 214"/>
</g>
<!-- tanks -->
<rect x="204" y="191" width="47" height="46" fill="url(#tank)"/>
<path d="M214 228 L246 200" stroke="#5C6480" stroke-width="1.2"/>
<rect x="202" y="188" width="51" height="4" fill="#3A3142"/>
<rect x="271" y="187" width="49" height="50" fill="url(#tank)"/>
<rect x="269" y="184" width="53" height="4" fill="#3A3142"/>
<!-- lights -->
<g fill="#FFD870">
<circle cx="39" cy="92" r="2"/><circle cx="34" cy="112" r="1.6"/><circle cx="37" cy="134" r="1.6"/><circle cx="30" cy="156" r="1.5"/><circle cx="40" cy="178" r="1.6"/><circle cx="33" cy="200" r="1.6"/>
<circle cx="73" cy="85" r="2.8"/><circle cx="112" cy="99" r="2"/><circle cx="108" cy="113" r="1.6"/><circle cx="110" cy="132" r="1.6"/><circle cx="108" cy="152" r="1.5"/><circle cx="112" cy="175" r="1.5"/>
<circle cx="188" cy="127" r="1.8"/><circle cx="190" cy="148" r="1.5"/><circle cx="186" cy="170" r="1.5"/><circle cx="234" cy="119" r="2"/><circle cx="236" cy="140" r="1.6"/><circle cx="232" cy="160" r="1.5"/><circle cx="257" cy="122" r="2.4"/><circle cx="276" cy="160" r="1.6"/><circle cx="328" cy="152" r="1.6"/>
<circle cx="14" cy="213" r="1.7"/><circle cx="33" cy="209" r="1.7"/><circle cx="52" cy="207" r="1.5"/><circle cx="40" cy="222" r="1.6"/><circle cx="70" cy="190" r="1.7"/><circle cx="78" cy="210" r="1.6"/><circle cx="92" cy="214" r="1.5"/><circle cx="105" cy="216" r="1.7"/><circle cx="118" cy="212" r="1.6"/><circle cx="125" cy="224" r="1.5"/><circle cx="170" cy="228" r="2"/><circle cx="188" cy="214" r="1.6"/><circle cx="256" cy="215" r="1.6"/><circle cx="264" cy="226" r="1.6"/><circle cx="330" cy="205" r="1.7"/><circle cx="325" cy="225" r="1.6"/>
</g>
<circle cx="140" cy="228" r="5" fill="#F7B050" opacity="0.9" filter="url(#b05)"/>
<!-- ground -->
<rect x="0" y="238" width="340" height="97" fill="url(#gnd)"/>
<g fill="#9497B2">
<rect x="0" y="233" width="340" height="2.5"/><rect x="0" y="245" width="340" height="2.2"/><rect x="0" y="258" width="340" height="2.2"/>
<rect x="6" y="233" width="2" height="28"/><rect x="64" y="245" width="2" height="16"/><rect x="241" y="236" width="2" height="24"/><rect x="296" y="236" width="2" height="22"/><rect x="215" y="236" width="2" height="25"/><rect x="180" y="238" width="2" height="20"/>
</g>
<!-- torches -->
<g filter="url(#b05)">
<path d="M45 219 C38 226 36 234 40 241 H50 C54 234 52 226 45 219 Z" fill="#F08A2A"/>
<path d="M97 224 C90 231 88 239 92 246 H102 C106 239 104 231 97 224 Z" fill="#F08A2A"/>
<path d="M224 236 C220 240 219 244 221 248 H227 C229 244 228 240 224 236 Z" fill="#F08A2A"/>
<circle cx="45" cy="235" r="2.8" fill="#FFE6A0"/><circle cx="97" cy="240" r="2.8" fill="#FFE6A0"/><circle cx="224" cy="244" r="2" fill="#FFE6A0"/>
</g>
<g stroke="#1A1216" stroke-width="2.2"><path d="M45 240 L34 272 M45 240 L56 272 M97 245 L87 273 M97 245 L107 273 M224 248 L218 266 M224 248 L230 266"/></g>
<!-- reflections -->
<g filter="url(#b1)">
<path d="M96 286 C140 278 200 276 260 278 C300 280 316 288 306 296 C290 304 250 310 210 316 C170 322 130 326 100 320 C86 312 84 294 96 286 Z" fill="url(#puddle)"/>
<rect x="208" y="282" width="44" height="26" fill="#7A82A6"/>
<rect x="120" y="284" width="6" height="34" fill="#3A2422"/><rect x="150" y="280" width="5" height="30" fill="#3A2422" opacity="0.7"/><rect x="190" y="282" width="6" height="34" fill="#4A3030"/>
<ellipse cx="140" cy="300" rx="10" ry="6" fill="#FFD070"/>
<ellipse cx="98" cy="320" rx="8" ry="6" fill="#F0A848"/>
<path d="M0 312 C20 308 44 310 62 316 L60 335 L0 335 Z" fill="#6A3422"/>
<ellipse cx="30" cy="326" rx="14" ry="5" fill="#C87030"/>
<ellipse cx="270" cy="302" rx="12" ry="5" fill="#E8922E"/>
<path d="M110 282 C150 276 190 274 240 276" stroke="#6A3426" stroke-width="3" fill="none"/>
</g>
</g>
</svg>

<!-- slide text -->
<div class="fa" style="left:876px;top:337px;width:300px;font-weight:bold;color:#FF0000;-webkit-text-stroke:0;transform:scale(0.94,1.16);transform-origin:100% 26px">فهرست مطالب:</div>
<div class="fa" style="left:528.1px;top:371.9px;width:600px;transform:scaleX(1.1588)">مقدمه‌ای بر جایگاه صنعت نفت و گاز</div>
<div class="fa" style="left:527.8px;top:404.1px;width:600px;transform:scaleX(1.0531)">ایران</div>
<div class="fa" style="left:528.0px;top:438.2px;width:600px;transform:scaleX(1.1292)">مروری بر تاریخچه صنعت نفت ایران</div>
<div class="fa" style="left:528.0px;top:474.5px;width:600px;transform:scaleX(1.1329)">موقعیت زمین‌شناسی و جغرافیایی</div>
<div class="fa" style="left:527.9px;top:510.8px;width:600px;transform:scaleX(1.0862)">آشــنایی بــا زنجیــره ارزش در صــنعت</div>
<div class="fa" style="left:527.9px;top:542.5px;width:600px;transform:scaleX(1.0912)">نفت و گاز</div>
<div class="fa" style="left:528.1px;top:577.8px;width:600px;transform:scaleX(1.1727)">بخش بالادستی (اکتشاف و تولید)</div>
<div class="fa" style="left:528.1px;top:613.4px;width:600px;transform:scaleX(1.1751)">بخـــــش میان‌دســـــتی (انتقـــــال و</div>
<div class="fa" style="left:527.8px;top:645.0px;width:600px;transform:scaleX(1.0828)">ذخیره‌سازی)</div>
<div class="fa" style="left:528.0px;top:681.1px;width:600px;transform:scaleX(1.1471)">بخـــــش پایین‌دســـــتی (پـــــالایش و</div>
<div class="fa" style="left:528.0px;top:712.5px;width:600px;transform:scaleX(1.1333)">پتروشیمی)</div>
<div class="fa" style="left:528.1px;top:748.1px;width:600px;transform:scaleX(1.1771)">چالش‌ها و چشم‌انداز آینده</div>
<div class="a" style="left:1165.0px;top:380.8px;width:7.2px;height:7.2px;border-radius:50%;background:#A05CB5"></div>
<div class="a" style="left:1165.0px;top:447.1px;width:7.2px;height:7.2px;border-radius:50%;background:#A05CB5"></div>
<div class="a" style="left:1165.0px;top:483.4px;width:7.2px;height:7.2px;border-radius:50%;background:#A05CB5"></div>
<div class="a" style="left:1165.0px;top:519.7px;width:7.2px;height:7.2px;border-radius:50%;background:#A05CB5"></div>
<div class="a" style="left:1165.0px;top:586.7px;width:7.2px;height:7.2px;border-radius:50%;background:#A05CB5"></div>
<div class="a" style="left:1165.0px;top:622.3px;width:7.2px;height:7.2px;border-radius:50%;background:#A05CB5"></div>
<div class="a" style="left:1165.0px;top:690.0px;width:7.2px;height:7.2px;border-radius:50%;background:#A05CB5"></div>
<div class="a" style="left:1165.0px;top:757.0px;width:7.2px;height:7.2px;border-radius:50%;background:#A05CB5"></div>
<!-- notes -->
<div class="a" style="left:205px;top:916px;width:1074px;height:1px;background:#C6C6C6"></div>

<!-- status -->
<div id="status" class="a"></div>
<!-- STATUS -->
<div class="a" style="left:0;top:962px;width:1279px;height:1px;background:#D4D4D4"></div>
<div class="a" style="left:916px;top:963px;width:40px;height:20px;background:#C8C8C8"></div>
<svg class="a" style="left:0;top:940px" width="1279" height="43" viewBox="0 940 1279 43">
<g fill="none" stroke="#6A6A6A" stroke-width="1">
<path d="M90.5 967.5 H96 L97.5 969 L99 967.5 H104 V976.5 H99 L97.5 978 L96 976.5 H90.5 Z M97.5 969 V977"/>
</g>
<path d="M99 975 L104.5 969.5 L106 971 L100.5 976.5 H99 Z" fill="#F3F3F3" stroke="#6A6A6A" stroke-width="0.9"/>
<g stroke="#6A6A6A" stroke-width="1" fill="none">
<path d="M760 971.5 H771 M760 974.5 H771 M760 977.5 H771"/>
<path d="M762.5 969.5 L765.5 966.5 L768.5 969.5"/>
</g>
<path d="M826 967 H839.5 V975.5 H831 L828 979.5 V975.5 H826 Z" fill="#6A6A6A" stroke="#6A6A6A" stroke-width="1" stroke-linejoin="round"/>
<g fill="none" stroke="#6A6A6A" stroke-width="1">
<rect x="929.5" y="966.5" width="13.5" height="12.5"/><path d="M932.5 966.5 V979 M932.5 975.5 H943"/><rect x="935.5" y="969.5" width="5" height="3"/>
<rect x="969.5" y="966.5" width="5" height="4.5"/><rect x="977.5" y="966.5" width="5" height="4.5"/><rect x="969.5" y="974" width="5" height="4.5"/><rect x="977.5" y="974" width="5" height="4.5"/>
<path d="M1009.5 967.5 C1012 966.5 1014.5 966.5 1016 968 C1017.5 966.5 1020 966.5 1022.5 967.5 V978 C1020 977 1017.5 977 1016 978.5 C1014.5 977 1012 977 1009.5 978 Z M1016 968 V978.5"/>
<path d="M1011.5 970 H1014.5 M1011.5 972.5 H1014.5 M1011.5 975 H1014.5 M1017.5 970 H1020.5 M1017.5 972.5 H1020.5 M1017.5 975 H1020.5"/>
<path d="M1049.5 967.5 H1062.5 M1050.5 968 V973.5 H1061.5 V968 M1056 973.5 V978.5 M1052.5 978.5 H1059.5"/>
<rect x="1052.5" y="969.5" width="7" height="2"/>
<path d="M1082 972.7 H1089.7"/>
<path d="M1199.5 972.7 H1207.5 M1203.5 968.7 V976.7"/>
<rect x="1262" y="966.5" width="11" height="12"/>
</g>
<path d="M1095 972.5 H1195" stroke="#A6A6A6" stroke-width="1"/>
<rect x="1143" y="967" width="5" height="11" fill="#6A6A6A"/>
<g fill="#6A6A6A"><path d="M1267.5 967.5 L1265.5 970 H1269.5 Z M1267.5 978 L1265.5 975.5 H1269.5 Z M1262.5 972.7 L1265 970.7 V974.7 Z M1272.5 972.7 L1270 970.7 V974.7 Z"/></g>
</svg>
<!-- right scrollbar -->
<div class="a" style="left:1264px;top:159px;width:15px;height:701px;background:#DADADA"></div>
<div class="a" style="left:1264px;top:159px;width:15px;height:15px;background:#fff;border:1px solid #ABABAB"></div>
<div class="a" style="left:1267.5px;top:164px;width:0;height:0;border-left:4px solid transparent;border-right:4px solid transparent;border-bottom:4px solid #777"></div>
<div class="a" style="left:1264px;top:212px;width:15px;height:19px;background:#fff;border:1px solid #ABABAB"></div>
<div class="a" style="left:1264px;top:845px;width:15px;height:15px;background:#fff;border:1px solid #ABABAB"></div>
<div class="a" style="left:1267.5px;top:851px;width:0;height:0;border-left:4px solid transparent;border-right:4px solid transparent;border-top:4px solid #777"></div>
<svg class="a" style="left:1264px;top:860px" width="15" height="35" viewBox="1264 860 15 35">
<g fill="#777"><path d="M1271.5 865 L1275.5 869 H1267.5 Z M1271.5 869 L1275.5 873 H1267.5 Z M1271.5 887 L1275.5 883 H1267.5 Z M1271.5 891 L1275.5 887 H1267.5 Z"/></g>
</svg>
<!-- /STATUS -->
<!-- ICONS -->
<svg class="a" style="left:0;top:0" width="1279" height="160" viewBox="0 0 1279 160">
<!-- QAT -->
<g fill="none" stroke="#fff" stroke-width="1.6">
<path d="M22.3 10.8 H33.5 L35.2 12.5 V23.2 H22.3 Z"/>
<path d="M25 11 V16 H32 V11"/>
<path d="M25 23 V19.5 H32 V23"/>
</g>
<g fill="none" stroke="#D99584" stroke-width="1.8" stroke-linecap="round">
<path d="M53 13.5 L56.5 10.5 M53 13.5 L56.5 16.5 M53 13.5 H60 C63 13.5 64.5 16 64.5 18.5 C64.5 21 63 22.5 61 22.5"/>
</g>
<path d="M70 15 H75 L72.5 17.5 Z" fill="#D99584"/>
<g fill="none" stroke="#fff" stroke-width="1.8">
<path d="M89.5 12.5 A6 6 0 1 0 96 11.8"/>
</g>
<path d="M94 9.8 L99 11 L95.5 15 Z" fill="#fff"/>
<g fill="none" stroke="#fff" stroke-width="1.3">
<path d="M114 10.7 H130"/><path d="M115.5 11 V20.5 H120"/><path d="M128.5 11 V14.5"/>
<circle cx="124.8" cy="18.3" r="4.6"/>
<path d="M119.5 24.5 H126.5"/><path d="M121.5 22.5 L120 24.5"/>
</g>
<path d="M123.3 16 L127.3 18.3 L123.3 20.6 Z" fill="#fff"/>
<g fill="none" stroke="#F0C9BC" stroke-width="1.2">
<path d="M146 13 H155"/><path d="M147 15.5 L150.5 19.5 L154 15.5"/>
</g>
<!-- title right controls -->
<g fill="none" stroke="#F5D5CA" stroke-width="1.1">
<rect x="1112.5" y="10.2" width="12" height="9.5"/><path d="M1112.5 12.7 H1124.5"/>
<path d="M1118.5 18.5 V14 M1116.3 16 L1118.5 13.8 L1120.7 16"/>
<path d="M1159.7 15.5 H1170"/>
<rect x="1206" y="13" width="7.5" height="7"/><path d="M1208.5 13 V11 H1216 V17.5 H1213.5"/>
<path d="M1252 10.2 L1262 20 M1262 10.2 L1252 20"/>
</g>
<g fill="none" stroke="#fff" stroke-width="1.2">
<circle cx="1216.3" cy="45.8" r="4.3"/>
<path d="M1208.5 56.5 C1209 51.5 1212 50 1216 50 C1217.5 50 1218.5 50.3 1219.5 50.8"/>
<path d="M1218 54 H1223 M1220.5 51.5 V56.5"/>
</g>
<g fill="none" stroke="#fff" stroke-width="1.1">
<path d="M682.5 51 C680 49 679.8 46.5 679.8 45.8 A5.7 5.7 0 0 1 691.2 45.8 C691.2 46.5 691 49 688.5 51 V53 H682.5 Z"/>
<path d="M682.5 54.8 H688.5"/><path d="M683.5 56.5 H687.5"/>
</g>
<!-- Clipboard group -->
<rect x="17" y="75.5" width="23.5" height="24.3" rx="1.5" fill="#EBC274"/>
<rect x="22" y="73.7" width="14" height="5" rx="0.8" fill="#6D6D6D"/>
<rect x="27" y="72" width="4" height="3" rx="1.5" fill="#6D6D6D"/>
<rect x="27.8" y="72.8" width="2.4" height="1.5" fill="#F3F3F3"/>
<path d="M31.5 83.5 H40 L44.3 87.8 V101.2 H31.5 Z" fill="#fff" stroke="#6D6D6D" stroke-width="1"/>
<path d="M40 83.5 V87.8 H44.3" fill="none" stroke="#6D6D6D" stroke-width="1"/>
<path d="M26 127 H31 L28.5 130 Z" fill="#6D6D6D"/>
<g fill="none" stroke="#6D6D6D" stroke-width="1.5"><path d="M55.5 71 L63.5 81 M66 71 L58 81"/></g>
<g fill="none" stroke="#3F7FC2" stroke-width="1.3"><circle cx="57" cy="82" r="2.5"/><circle cx="65" cy="82" r="2.5"/></g>
<g fill="#fff" stroke="#6D6D6D" stroke-width="1">
<path d="M53.5 94.8 H58.5 L61 97.3 V104 H53.5 Z"/>
<path d="M59.5 97.5 H64.5 L67.5 100.5 V107.5 H59.5 Z"/>
</g>
<g stroke="#3F7FC2" stroke-width="1"><path d="M55 99.5 H58 M55 101.8 H58 M61 102.5 H66 M61 104.8 H66"/></g>
<path d="M75 99.8 H80 L77.5 102.8 Z" fill="#6D6D6D"/>
<path d="M60.5 121.5 L66.5 116.8 L69 119.3 L64.3 125.3 Z" fill="#6D6D6D"/>
<path d="M53 124.5 L60 120.5 L64.5 125 L59.5 130.5 C57 129 54.5 127 53 124.5 Z" fill="#EBC274"/>
<g fill="none" stroke="#7A7A7A" stroke-width="1"><path d="M81.5 144.5 V151.5 H88.5 M83.5 146.5 L88 151"/><path d="M85.5 151 H88 V148.5"/></g>
<!-- Slides group -->
<rect x="108.5" y="74.5" width="27" height="22" rx="2" fill="#fff" stroke="#6D6D6D" stroke-width="1"/>
<rect x="112" y="78.2" width="20" height="5.6" fill="#D3D3D3"/>
<g stroke="#8A8A8A" stroke-width="0.9"><path d="M112 88.5 H113.5 M115 88.5 H132 M112 91.5 H113.5 M115 91.5 H132"/></g>
<g stroke="#EBC274" stroke-width="1.6" stroke-linecap="round">
<path d="M111.8 70.5 V81 M106.5 75.7 H117 M108.1 72 L115.5 79.4 M115.5 72 L108.1 79.4"/>
</g>
<circle cx="111.8" cy="75.7" r="2.3" fill="#fff" stroke="#EBC274" stroke-width="1"/>
<path d="M133 127.5 H138 L135.5 130.5 Z" fill="#6D6D6D"/>
<rect x="146.5" y="71.3" width="15" height="13.3" fill="#fff" stroke="#6D6D6D" stroke-width="1"/>
<rect x="148.5" y="73.5" width="11" height="1.6" fill="#C8C8C8"/>
<rect x="148.5" y="76.3" width="4.5" height="6.5" fill="#C8C8C8"/>
<g stroke="#9A9A9A" stroke-width="0.9"><path d="M154.5 77 H159 M154.5 79.5 H159 M154.5 82 H159"/></g>
<path d="M204 76.7 H209 L206.5 80 Z" fill="#6D6D6D"/>
<rect x="147.5" y="95.5" width="14" height="12" fill="#fff" stroke="#6D6D6D" stroke-width="1"/>
<rect x="149.5" y="100" width="4.5" height="6" fill="#C8C8C8"/>
<g stroke="#9A9A9A" stroke-width="0.9"><path d="M155.5 100.5 H160 M155.5 103 H160"/></g>
<path d="M147 100 C148 95.5 154 93.5 157.5 97.5" fill="none" stroke="#3F7FC2" stroke-width="1.6"/>
<path d="M145.5 97 L147 101.5 L151 98.5 Z" fill="#3F7FC2"/>
<g stroke="#EBC274" stroke-width="1.1" stroke-linecap="round"><path d="M149.5 115.5 V122 M146.2 118.8 H152.8 M147.2 116.5 L151.8 121.1 M151.8 116.5 L147.2 121.1"/></g>
<circle cx="149.5" cy="118.8" r="1.3" fill="#fff"/>
<path d="M152.5 119.3 H161.5 V122.5 H152.5" fill="none" stroke="#E07A3A" stroke-width="1.2"/>
<rect x="152.5" y="124.5" width="9" height="7" fill="#fff" stroke="#6D6D6D" stroke-width="1"/>
<rect x="154" y="126.3" width="6" height="1.6" fill="#C8C8C8"/>
<path d="M207.3 123 H212 L209.65 126.3 Z" fill="#6D6D6D"/>
<!-- Font group -->
<rect x="235.5" y="75.5" width="92" height="22" fill="#E8E8E8" stroke="#C6C6C6" stroke-width="1"/>
<rect x="327.5" y="75.5" width="54" height="22" fill="#E8E8E8" stroke="#C6C6C6" stroke-width="1"/>
<g fill="none" stroke="#A6A6A6" stroke-width="1"><path d="M311 84 L317.5 90.5 L324 84"/><path d="M366 84 L372.5 90.5 L379 84"/></g>
<g fill="none" stroke="#A6A6A6" stroke-width="1.6">
<path d="M389 92 L393.5 79.5 L398 92 M390.5 88 H396.5"/>
<path d="M411.5 92.5 L415 83 L418.5 92.5 M412.7 89.5 H417.3"/>
</g>
<path d="M397.5 78 L400 74.8 L402.5 78 Z" fill="#A6A6A6"/>
<path d="M419 76 H424 L421.5 79 Z" fill="#A6A6A6"/>
<path d="M430.5 76 V97" stroke="#C6C6C6"/>
<g fill="none" stroke="#A6A6A6" stroke-width="1.1"><path d="M440 90 L443.5 79 L447 90 M441 86.5 H446"/></g>
<path d="M444.5 88 L450 82 L454 86 L448.5 92 Z" fill="#BDBDBD"/>
<path d="M442.5 90.5 L445 93 L447 91 L444.5 88.5 Z" fill="#D6D6D6"/>
<g fill="#A6A6A6" font-family="Liberation Sans" >
<text x="241" y="121.3" font-size="12.5" font-weight="bold">B</text>
<text x="263" y="121.3" font-size="12.5" font-style="italic" font-family="Liberation Serif">I</text>
<text x="285" y="121.3" font-size="12.5" font-weight="bold">U</text>
<text x="307.3" y="121.8" font-size="13" font-weight="bold" style="filter:drop-shadow(1px 1px 0.6px #BBB)">S</text>
<text x="326" y="121.3" font-size="11" font-weight="bold" letter-spacing="-0.6">abc</text>
<text x="348" y="118.5" font-size="10.5" font-weight="bold" letter-spacing="-0.6">AV</text>
<text x="381" y="121.3" font-size="12.5" font-weight="bold" letter-spacing="-0.4">Aa</text>
<text x="425.5" y="122.3" font-size="15.5" font-weight="bold">A</text>
</g>
<path d="M285 123.2 H294.5" stroke="#A6A6A6" stroke-width="1.2"/>
<path d="M325.5 117.5 H342.5" stroke="#A6A6A6" stroke-width="1"/>
<g fill="none" stroke="#A6A6A6" stroke-width="1"><path d="M348.5 121.5 H363.5 M350.5 119.5 L348.5 121.5 L350.5 123.5 M361.5 119.5 L363.5 121.5 L361.5 123.5"/></g>
<path d="M367.5 117.5 H373 L370.25 120.3 Z M401 117.5 H406 L403.5 120.3 Z M445 117.5 H450 L447.5 120.3 Z" fill="#B8B8B8"/>
<path d="M415.5 107 V128" stroke="#C6C6C6"/>
<g fill="none" stroke="#A6A6A6" stroke-width="1"><path d="M453.5 144.5 V151.5 H460.5 M455.5 146.5 L460 151"/><path d="M457.5 151 H460 V148.5"/></g>
<!-- Paragraph group -->
<rect x="473" y="75" width="33.7" height="22.8" fill="#C6C6C6"/>
<g stroke="#A0A0A0" stroke-width="1.1"><path d="M476.5 80 H485 M476.5 85.5 H485 M476.5 91.2 H485"/></g>
<g fill="#A0A0A0"><circle cx="488.3" cy="79.8" r="1.4"/><circle cx="488.3" cy="85.5" r="1.4"/><circle cx="488.3" cy="91.2" r="1.4"/></g>
<g stroke="#A6A6A6" stroke-width="1.1"><path d="M511 79.5 H519 M511 85.3 H519 M511 91.2 H519"/></g>
<g fill="#A6A6A6" font-family="Liberation Sans" font-size="5.5"><text x="520.5" y="81.5">1</text><text x="520.5" y="87.3">2</text><text x="520.5" y="93.2">3</text></g>
<path d="M532.2 85 H537 L534.6 87.5 Z" fill="#B8B8B8"/>
<g stroke="#A6A6A6" stroke-width="1.1" fill="none">
<path d="M546.5 79 H563 M554 82.2 H563 M554 85.5 H563 M554 88.8 H563 M546.5 92.2 H563"/>
<path d="M553 85.5 H547.5 M550 83 L547.5 85.5 L550 88"/>
<path d="M569 79 H585.5 M577 82.2 H585.5 M577 85.5 H585.5 M577 88.8 H585.5 M569 92.2 H585.5"/>
<path d="M569 85.5 H575 M572.5 83 L575 85.5 L572.5 88"/>
<path d="M597.5 79 V93.5 M595 81.3 L597.5 78.5 L600 81.3 M595 91.2 L597.5 94 L600 91.2"/>
<path d="M602 80.5 H609.5 M602 84 H609.5 M602 87.5 H609.5 M602 91 H609.5"/>
</g>
<path d="M614 85 H619 L616.5 87.5 Z" fill="#B8B8B8"/>
<g stroke="#A6A6A6" stroke-width="1.1" fill="none">
<path d="M476.6 112.3 H491.3 M476.6 115.5 H488 M476.6 118.7 H491.3 M476.6 121.8 H488"/>
<path d="M498.8 112.3 H512.8 M500.8 115.5 H510.8 M498.8 118.7 H512.8 M500.8 121.8 H510.8"/>
<path d="M520.9 112.3 H535.4 M524 115.5 H535.4 M520.9 118.7 H535.4 M524 121.8 H535.4"/>
<path d="M542.9 112.3 H557 M542.9 115.5 H557 M542.9 118.7 H557 M542.9 121.8 H557"/>
</g>
<path d="M561.6 116.5 H566.5 L564.05 119 Z" fill="#B8B8B8"/>
<g fill="#A6A6A6">
<path d="M579.4 113.5 L583.5 117 L579.4 120.5 Z"/>
<path d="M613.5 113.5 L609.5 117 L613.5 120.5 Z"/>
</g>
<g font-family="Liberation Sans" font-size="11" font-weight="bold" fill="#A6A6A6"><text x="584" y="121">¶</text><text x="602" y="121">¶</text></g>
<g stroke="#A6A6A6" stroke-width="1.1" fill="none">
<path d="M626 112.5 H631 M634 112.5 H639 M626 115.8 H631 M634 115.8 H639 M626 119 H631 M634 119 H639 M626 122 H631 M634 122 H639"/>
</g>
<path d="M644.7 116.5 H650 L647.35 119 Z" fill="#B8B8B8"/>
<g stroke="#A6A6A6" stroke-width="1.1" fill="none">
<path d="M658 71 V85 M661.5 71 V85 M665 79 V85 M669 79 V85 M656 82.5 L658 85 L660 82.5 M659.5 82.5 L661.5 85 L663.5 82.5 M663 82.5 L665 85 L667 82.5 M667 82.5 L669 85 L671 82.5"/>
</g>
<g font-family="Liberation Sans" font-size="9" font-weight="bold" fill="#A6A6A6"><text x="665" y="78">A</text></g>
<path d="M679 77.5 H684 L681.5 80 Z M679 100.5 H684 L681.5 103 Z M679 123.5 H684 L681.5 126 Z" fill="#B8B8B8"/>
<g stroke="#A6A6A6" stroke-width="1" fill="none">
<path d="M660 94 H657.5 V108 H660 M671 94 H673.5 V108 H671"/>
<path d="M665.5 94 V99 M663.5 96 L665.5 94 L667.5 96 M665.5 102 V107.5 M663.5 105.5 L665.5 107.5 L667.5 105.5"/>
</g>
<g stroke="#D9C2D6" stroke-width="1" stroke-dasharray="1 1"><path d="M659.5 101 H672"/></g>
<path d="M657.3 115.6 H668 L671 119.5 H660 Z" fill="#9A9A9A"/>
<rect x="661.5" y="121" width="11.5" height="10" fill="#F4EEF4" stroke="#A6A6A6" stroke-width="1"/>
<g stroke="#C6A9C6" stroke-width="1"><path d="M664 124.5 H665 M667 124.5 H671 M664 127.5 H665 M667 127.5 H671"/></g>
<g fill="none" stroke="#A6A6A6" stroke-width="1"><path d="M684 144.5 V151.5 H691 M686 146.5 L690.5 151"/><path d="M688 151 H690.5 V148.5"/></g>
<!-- Drawing group -->
<rect x="705.5" y="70.5" width="138.5" height="61" fill="#fff" stroke="#C6C6C6" stroke-width="1"/>
<rect x="827.5" y="70.5" width="16.5" height="61" fill="#F3F3F3" stroke="#C6C6C6" stroke-width="1"/>
<path d="M827.5 91 H844 M827.5 111.5 H844" stroke="#C6C6C6"/>
<path d="M828 112 H843.5" stroke="#6D6D6D" stroke-width="1"/>
<g fill="none" stroke="#C6C6C6" stroke-width="1"><path d="M829.5 85 L835.7 78.5 L842 85"/></g>
<g fill="none" stroke="#6D6D6D" stroke-width="1"><path d="M829.5 97.5 L835.7 104 L842 97.5"/><path d="M829.5 118 L835.7 124.5 L842 118"/></g>
<g fill="none" stroke="#6D6D6D" stroke-width="1">
<rect x="708.5" y="74.5" width="14.5" height="12"/>
<path d="M715 78.5 H721 M715 81 H721 M711 83.5 H721"/>
<path d="M729.5 75 L743 87"/>
<path d="M749.5 75 L762.5 86.5 M762.5 82 V86.5 H758"/>
<rect x="768.5" y="75" width="15.5" height="11.5"/>
<ellipse cx="795.5" cy="80.8" rx="7.5" ry="5.8"/>
<rect x="808.5" y="75" width="15.5" height="11.5" rx="3"/>
<path d="M716.5 94 L723 107.5 H710 Z"/>
<path d="M729.5 95 H736 V106.5 H744"/>
<path d="M749.5 95 H756 V106.5 H763.5 M760.5 103.5 L763.5 106.5 L760.5 109.5"/>
<path d="M768.5 97.5 H775.5 V93.5 L783 100.8 L775.5 108 V104 H768.5 Z"/>
<path d="M792.5 93.5 H798.5 V100.5 H802.5 L795.5 108 L788.5 100.5 H792.5 Z"/>
<path d="M809 97 C809 94.5 811 93.5 813 93.5 H817 C817 96 819 97.5 822 97.5 C823 100 823 104 821 106.5 H809 Z"/>
<path d="M717 114 C713.5 116 714 118 716.5 119 C719 120 717.5 122 715.5 122 C714 123.5 716 126 718 127.5"/>
<path d="M729.5 115 C736 114 743 118 744 127.5"/>
<path d="M749.5 127 C751.5 120 753 114 755.5 114 C758.5 114 759.5 127 764 127"/>
<path d="M776.5 114 C774.5 114 774.5 115 774.5 117 C774.5 119.5 774 120.5 772.5 120.8 C774 121 774.5 122 774.5 124.5 C774.5 126.5 774.5 127.5 776.5 127.5"/>
<path d="M795.5 114 C797.5 114 797.5 115 797.5 117 C797.5 119.5 798 120.5 799.5 120.8 C798 121 797.5 122 797.5 124.5 C797.5 126.5 797.5 127.5 795.5 127.5"/>
<path d="M815.7 113.5 L817.7 118.5 L823 118.8 L818.8 122.2 L820.3 127.5 L815.7 124.5 L811.1 127.5 L812.6 122.2 L808.4 118.8 L813.7 118.5 Z"/>
</g>
<g font-family="Liberation Sans" font-size="7" font-weight="bold" fill="#3F7FC2"><text x="710" y="81">A</text></g>
<rect x="855.5" y="72.5" width="10" height="10" fill="#fff" stroke="#6D6D6D" stroke-width="1"/>
<rect x="860" y="77" width="14" height="14" fill="#EBC274"/>
<rect x="855.5" y="72.5" width="10" height="10" fill="none" stroke="#6D6D6D" stroke-width="1"/>
<rect x="872.5" y="88.5" width="10" height="10" fill="#fff" stroke="#6D6D6D" stroke-width="1"/>
<path d="M868 127.4 H873 L870.5 130.4 Z" fill="#6D6D6D"/>
<rect x="902" y="73" width="28.5" height="28.5" rx="5" fill="#F3EDF3" stroke="#C8C8C8" stroke-width="1"/>
<path d="M913 101 C912 97 914 93 918 92 L929 81 L932 84 L922 95 C921.5 99 917 102 913 101 Z" fill="#A6A6A6" stroke="#F3F3F3" stroke-width="1"/>
<path d="M930.5 130 H935.5 L933 133 Z" fill="#B8B8B8"/>
<g fill="none" stroke="#B5B5B5" stroke-width="1">
<path d="M943.5 76.5 L948.5 71 L955 77 L950 82.5 Z M945 70 C946 69 948 69.5 948.5 71"/>
<path d="M940.5 98 V108 H955 M955 101 L947.5 108 L946 105"/>
<path d="M941.5 125 L948 119 H955 L952.5 126 C951.5 127.5 950 128 948 128 H943.5 C941.5 128 941 126.5 941.5 125 Z"/>
</g>
<rect x="940.5" y="84.5" width="15" height="1.5" fill="#D0D0D0"/>
<path d="M1012.3 77.5 H1017 L1014.65 80 Z M1037 100.5 H1041.5 L1039.25 103 Z M1033 123.5 H1037.5 L1035.25 126 Z" fill="#B8B8B8"/>
<g fill="none" stroke="#A6A6A6" stroke-width="1"><path d="M1042.5 144.5 V151.5 H1049.5 M1044.5 146.5 L1049 151"/><path d="M1046.5 151 H1049 V148.5"/></g>
<!-- Editing group -->
<circle cx="1075.5" cy="76.5" r="3.8" fill="none" stroke="#3F7FC2" stroke-width="1.6"/>
<path d="M1072.5 79.5 L1066.5 84" stroke="#3F7FC2" stroke-width="2.2" stroke-linecap="round"/>
<g font-family="Liberation Sans" font-size="9.5">
<text x="1064.5" y="101" fill="#444">a</text><text x="1070.2" y="101" fill="#A040A0">b</text>
<text x="1069" y="108.5" fill="#3F7FC2">ac</text>
</g>
<path d="M1067 103 V106.5 H1069 M1066 105.5 L1067.5 107 L1069 105.5" fill="none" stroke="#3F7FC2" stroke-width="0.9"/>
<path d="M1134.8 100 H1139.9 L1137.35 102.8 Z" fill="#555"/>
<path d="M1069.5 116.5 V129.5 L1072.7 126.3 L1075 131 L1076.7 130.2 L1074.5 125.5 L1078.5 125.5 Z" fill="#fff" stroke="#555" stroke-width="1"/>
<path d="M1118 123 H1123 L1120.5 125.8 Z" fill="#555"/>
<!-- collapse ribbon -->
<path d="M1261 152 L1266 147 L1271 152" fill="none" stroke="#555" stroke-width="1.1"/>
</svg>
<!-- /ICONS -->
<!-- TEXT -->
<div class="tx" style="left:556.31px;top:9.90px;font-size:13.6px;color:#F7DCD3;transform:scaleX(0.8916);">powerpoint.pptx  -  PowerPoint</div>
<div class="tx" style="left:1038.30px;top:9.90px;font-size:13.4px;color:#9E3B22;transform:scaleX(0.9000);">Sign in</div>
<div class="tx" style="left:19.62px;top:41.90px;font-size:13.2px;color:#FFFFFF;transform:scaleX(0.8800);">File</div>
<div class="tx" style="left:72.82px;top:41.90px;font-size:13.2px;color:#B7472A;transform:scaleX(0.9818);">Home</div>
<div class="tx" style="left:131.59px;top:41.90px;font-size:13.2px;color:#FFFFFF;transform:scaleX(0.9141);">Insert</div>
<div class="tx" style="left:188.10px;top:41.90px;font-size:13.2px;color:#FFFFFF;transform:scaleX(0.8974);">Design</div>
<div class="tx" style="left:252.00px;top:41.90px;font-size:13.2px;color:#FFFFFF;transform:scaleX(0.8984);">Transitions</div>
<div class="tx" style="left:337.00px;top:41.90px;font-size:13.2px;color:#FFFFFF;transform:scaleX(0.9308);">Animations</div>
<div class="tx" style="left:424.13px;top:41.90px;font-size:13.2px;color:#FFFFFF;transform:scaleX(0.8731);">Slide Show</div>
<div class="tx" style="left:508.12px;top:41.90px;font-size:13.2px;color:#FFFFFF;transform:scaleX(0.8750);">Review</div>
<div class="tx" style="left:572.50px;top:41.90px;font-size:13.2px;color:#FFFFFF;transform:scaleX(0.8929);">View</div>
<div class="tx" style="left:624.06px;top:41.90px;font-size:13.2px;color:#FFFFFF;transform:scaleX(0.9423);">Help</div>
<div class="tx" style="left:705.70px;top:41.80px;font-size:13.2px;color:#FFFFFF;transform:scaleX(0.9265);">Tell me what you want to do</div>
<div class="tx" style="left:1226.12px;top:43.07px;font-size:12.9px;color:#FFFFFF;transform:scaleX(0.8758);">Share</div>
<div class="tx" style="left:14.58px;top:107.37px;font-size:12.5px;color:#262626;transform:scaleX(0.9167);">Paste</div>
<div class="tx" style="left:109.85px;top:106.97px;font-size:12.5px;color:#262626;transform:scaleX(0.9500);">New</div>
<div class="tx" style="left:104.77px;top:123.27px;font-size:12.5px;color:#262626;transform:scaleX(0.9346);">Slide</div>
<div class="tx" style="left:164.62px;top:73.97px;font-size:12.5px;color:#262626;transform:scaleX(0.9750);">Layout</div>
<div class="tx" style="left:164.76px;top:96.27px;font-size:12.5px;color:#262626;transform:scaleX(0.8438);">Reset</div>
<div class="tx" style="left:164.66px;top:119.67px;font-size:12.5px;color:#262626;transform:scaleX(0.9400);">Section</div>
<div class="tx" style="left:11.75px;top:144.10px;font-size:11.5px;color:#262626;transform:scaleX(1.0511);">Clipboard</div>
<div class="tx" style="left:143.33px;top:144.30px;font-size:11.5px;color:#262626;transform:scaleX(0.9667);">Slides</div>
<div class="tx" style="left:324.34px;top:144.40px;font-size:11.5px;color:#262626;transform:scaleX(1.0636);">Font</div>
<div class="tx" style="left:544.71px;top:144.30px;font-size:11.5px;color:#262626;transform:scaleX(0.9923);">Paragraph</div>
<div class="tx" style="left:843.43px;top:144.40px;font-size:11.5px;color:#262626;transform:scaleX(1.0700);">Drawing</div>
<div class="tx" style="left:1083.41px;top:144.50px;font-size:11.5px;color:#262626;transform:scaleX(1.0879);">Editing</div>
<div class="tx" style="left:330.09px;top:80.80px;font-size:13px;color:#A6A6A6;transform:scaleX(0.9077);">22</div>
<div class="tx" style="left:849.20px;top:107.57px;font-size:12.5px;color:#262626;transform:scaleX(0.9500);">Arrange</div>
<div class="tx" style="left:899.43px;top:107.57px;font-size:12.5px;color:#A6A6A6;transform:scaleX(0.9710);">Quick</div>
<div class="tx" style="left:895.10px;top:124.07px;font-size:12.5px;color:#A6A6A6;transform:scaleX(0.9030);">Styles</div>
<div class="tx" style="left:958.50px;top:73.47px;font-size:12.5px;color:#A6A6A6;transform:scaleX(0.9037);">Shape Fill</div>
<div class="tx" style="left:958.46px;top:96.37px;font-size:12.5px;color:#A6A6A6;transform:scaleX(0.9385);">Shape Outline</div>
<div class="tx" style="left:958.49px;top:119.37px;font-size:12.5px;color:#A6A6A6;transform:scaleX(0.9132);">Shape Effects</div>
<div class="tx" style="left:1083.52px;top:73.47px;font-size:12.5px;color:#262626;transform:scaleX(0.9773);">Find</div>
<div class="tx" style="left:1083.58px;top:96.37px;font-size:12.5px;color:#262626;transform:scaleX(0.9182);">Replace</div>
<div class="tx" style="left:1083.30px;top:119.37px;font-size:12.5px;color:#262626;transform:scaleX(0.8971);">Select</div>
<div class="tx" style="left:213.89px;top:925.69px;font-size:16.3px;color:#6E6E6E;transform:scaleX(0.9062);">Click to add notes</div>
<div class="tx" style="left:7.08px;top:968.40px;font-size:11.2px;color:#444444;transform:scaleX(1.0164);">Slide 3 of 35</div>
<div class="tx" style="left:121.58px;top:968.40px;font-size:11.2px;color:#444444;transform:scaleX(1.0159);">English (United States)</div>
<div class="tx" style="left:775.57px;top:968.40px;font-size:11.2px;color:#444444;transform:scaleX(1.0286);">Notes</div>
<div class="tx" style="left:842.70px;top:968.40px;font-size:11.2px;color:#444444;">Comments</div>
<div class="tx" style="left:1219.60px;top:968.40px;font-size:11.2px;color:#444444;">101%</div>
<div class="tx" style="left:11.80px;top:175.27px;font-size:15.7px;color:#444444;">1</div>
<div class="tx" style="left:11.70px;top:291.77px;font-size:15.7px;color:#444444;">2</div>
<div class="tx" style="left:11.70px;top:406.67px;font-size:15.7px;color:#D24726;">3</div>
<div class="tx" style="left:12.70px;top:523.27px;font-size:15.7px;color:#444444;">4</div>
<div class="tx" style="left:11.70px;top:639.77px;font-size:15.7px;color:#444444;">5</div>
<div class="tx" style="left:11.70px;top:755.27px;font-size:15.7px;color:#444444;">6</div>
<div class="tx" style="left:11.70px;top:871.57px;font-size:15.7px;color:#444444;">7</div>
<!-- /TEXT -->
</body></html>
